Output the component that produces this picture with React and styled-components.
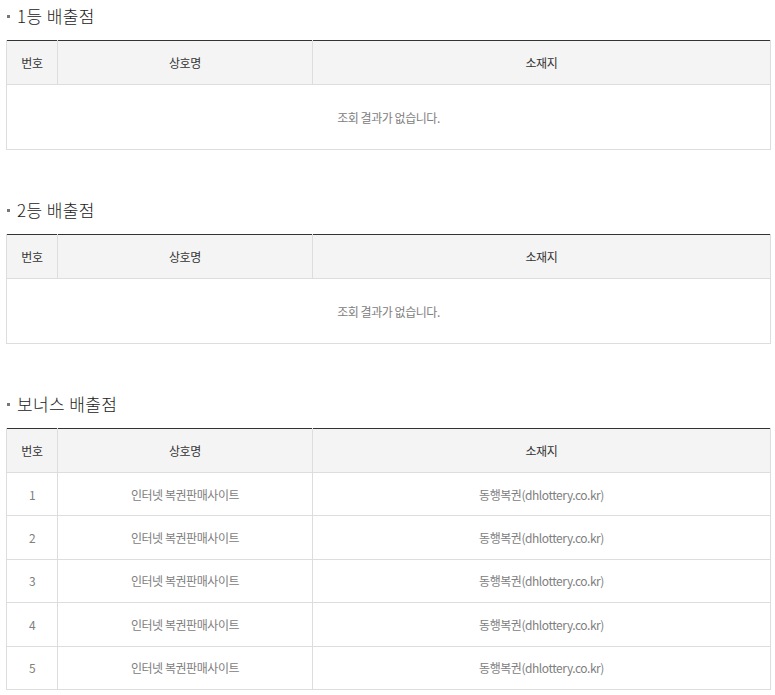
import React from "react";
import styled, { createGlobalStyle } from "styled-components";

const GlobalStyle = createGlobalStyle`
  body {
    margin: 0;
    background: #fff;
    font-family: "Noto Sans CJK KR", "Noto Sans", sans-serif;
  }
`;

const Page = styled.div`
  padding: 4px 5px 0 6px;
  width: 765px;
`;

const Section = styled.section`
  margin-bottom: 48px;

  &:last-child {
    margin-bottom: 0;
  }
`;

const Title = styled.h3`
  position: relative;
  margin: 0 0 12px;
  padding-left: 11px;
  height: 24px;
  line-height: 24px;
  font-size: 17px;
  font-weight: 300;
  color: #222;
  letter-spacing: 0.4px;

  &::before {
    content: "";
    position: absolute;
    left: 1px;
    top: 11px;
    width: 3px;
    height: 3px;
    background: #777;
  }
`;

const Table = styled.table`
  width: 100%;
  border-collapse: collapse;
  table-layout: fixed;
  border-top: 1px solid #333;
  font-size: 12px;
`;

const Th = styled.th`
  height: 43px;
  padding: 0;
  background: #f4f4f4;
  border: 1px solid #ddd;
  border-top: none;
  font-weight: 400;
  color: #333;
  text-align: center;
  letter-spacing: -0.3px;
`;

const Td = styled.td`
  height: ${(p) => (p.$empty ? "64px" : "42.4px")};
  padding: 0;
  border: 1px solid #ddd;
  color: #808080;
  text-align: center;
  letter-spacing: -0.45px;
`;

const columns = [
  { key: "no", label: "번호", width: "51px" },
  { key: "name", label: "상호명", width: "255px" },
  { key: "addr", label: "소재지" },
];

const StoreTable = ({ rows }) => (
  <Table>
    <colgroup>
      {columns.map((c) => (
        <col key={c.key} style={c.width ? { width: c.width } : undefined} />
      ))}
    </colgroup>
    <thead>
      <tr>
        {columns.map((c) => (
          <Th key={c.key}>{c.label}</Th>
        ))}
      </tr>
    </thead>
    <tbody>
      {rows.length === 0 ? (
        <tr>
          <Td $empty colSpan={3}>
            조회 결과가 없습니다.
          </Td>
        </tr>
      ) : (
        rows.map((r, i) => (
          <tr key={i}>
            <Td>{i + 1}</Td>
            <Td>{r.name}</Td>
            <Td>{r.addr}</Td>
          </tr>
        ))
      )}
    </tbody>
  </Table>
);

const online = { name: "인터넷 복권판매사이트", addr: "동행복권(dhlottery.co.kr)" };

const sections = [
  { title: "1등 배출점", rows: [] },
  { title: "2등 배출점", rows: [] },
  { title: "보너스 배출점", rows: [online, online, online, online, online] },
];

export default function App() {
  return (
    <>
      <GlobalStyle />
      <Page>
        {sections.map((s) => (
          <Section key={s.title}>
            <Title>{s.title}</Title>
            <StoreTable rows={s.rows} />
          </Section>
        ))}
      </Page>
    </>
  );
}
